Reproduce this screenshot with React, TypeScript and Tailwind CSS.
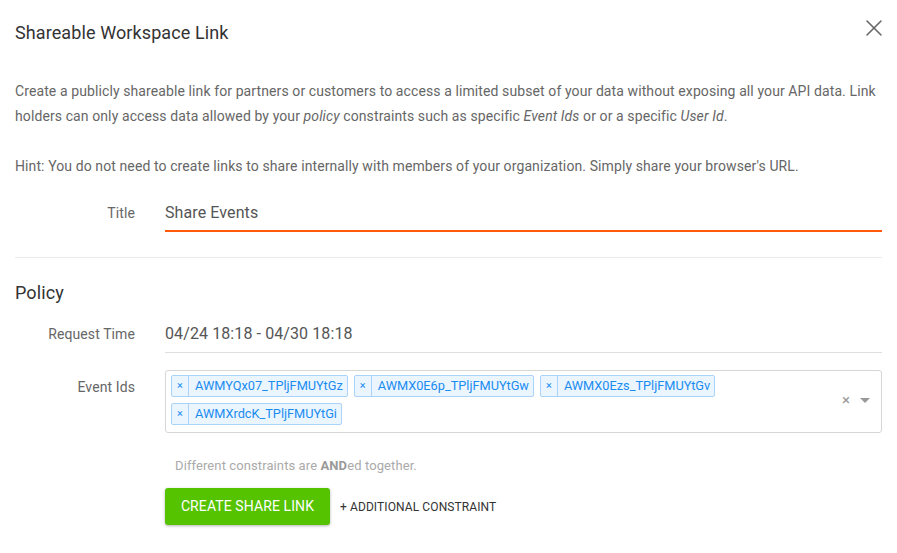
import { X } from 'lucide-react'

const EVENT_IDS = [
  'AWMYQx07_TPljFMUYtGz',
  'AWMX0E6p_TPljFMUYtGw',
  'AWMX0Ezs_TPljFMUYtGv',
  'AWMXrdcK_TPljFMUYtGi',
]

function Tag({ label }: { label: string }) {
  return (
    <div className="flex h-[22px] items-stretch rounded-[2px] border border-[#a9d3f9] bg-[#eaf5fe] text-[12.75px] tracking-normal text-[#1a8cf0]">
      <span className="flex w-[17px] items-center justify-center border-r border-[#a9d3f9] text-[11px]">×</span>
      <span className="flex items-center pl-[6px] pr-[4px] leading-none">{label}</span>
    </div>
  )
}

export default function App() {
  return (
    <div className="h-[553px] w-[897px] bg-white px-[15px] font-['Roboto',sans-serif] tracking-[0.1px] text-[#666]">
      {/* Header */}
      <div className="flex items-start justify-between pt-[21px]">
        <h1 className="text-[18px] leading-[24px] text-[#333]">Shareable Workspace Link</h1>
        <button className="mr-[-6px] mt-[-7px] text-[#666]">
          <X size={28} strokeWidth={1.3} />
        </button>
      </div>

      {/* Description */}
      <p className="mt-[-1px] pt-[35px] text-[14px] leading-[25px]">
        Create a publicly shareable link for partners or customers to access a limited subset of your data without exposing all your API data. Link holders can only access data allowed by your <i>policy</i> constraints such as specific <i>Event Ids</i> or or a specific <i>User Id</i>.
      </p>
      <p className="mt-[25px] text-[14px] leading-[25px]">
        Hint: You do not need to create links to share internally with members of your organization. Simply share your browser's URL.
      </p>

      {/* Title */}
      <div className="mt-[22px] grid grid-cols-[120px_1fr] gap-x-[30px]">
        <label className="text-right text-[14px] leading-[24px]">Title</label>
        <div className="border-b-2 border-[#ff5a0a] pb-[5px] text-[16px] leading-[24px] text-[#555]">Share Events</div>
      </div>

      <div className="mt-[25px] border-t border-[#ebebeb]" />

      {/* Policy */}
      <h2 className="mt-[23px] text-[18px] leading-[24px] text-[#333]">Policy</h2>

      <div className="mt-[17px] grid grid-cols-[120px_1fr] gap-x-[30px]">
        <label className="text-right text-[14px] leading-[24px]">Request Time</label>
        <div className="border-b border-[#dedede] pb-[6px] text-[16px] leading-[24px] text-[#555]">
          04/24 18:18 - 04/30 18:18
        </div>
      </div>

      <div className="mt-[17px] grid grid-cols-[120px_1fr] gap-x-[30px]">
        <label className="pt-[5px] text-right text-[14px] leading-[24px]">Event Ids</label>
        <div className="flex items-center rounded-[3px] border border-[#d6d6d6] pb-[7px] pl-[5px] pr-[10px] pt-[4px]">
          <div className="flex flex-1 flex-wrap gap-x-[6px] gap-y-[6px]">
            {EVENT_IDS.map((id) => (
              <Tag key={id} label={id} />
            ))}
          </div>
          <div className="flex items-center gap-[9px] text-[#999]">
            <span className="text-[15px] leading-none">×</span>
            <svg width="12" height="7" viewBox="0 0 12 7">
              <path d="M1 1h10L6 6z" fill="#999" />
            </svg>
          </div>
        </div>
      </div>

      <div className="ml-[160px] mt-[23px] text-[13px] leading-[20px] text-[#aaa]">
        Different constraints are <b className="text-[#999]">AND</b>ed together.
      </div>

      <div className="ml-[150px] mt-[12px] flex items-center gap-[10px]">
        <button className="h-[37px] w-[165px] rounded-[3px] bg-[#55c300] text-[14px] uppercase text-white shadow-[0_1px_3px_rgba(0,0,0,0.3)]">
          Create Share Link
        </button>
        <button className="text-[12px] uppercase text-[#333]">+ Additional Constraint</button>
      </div>
    </div>
  )
}
